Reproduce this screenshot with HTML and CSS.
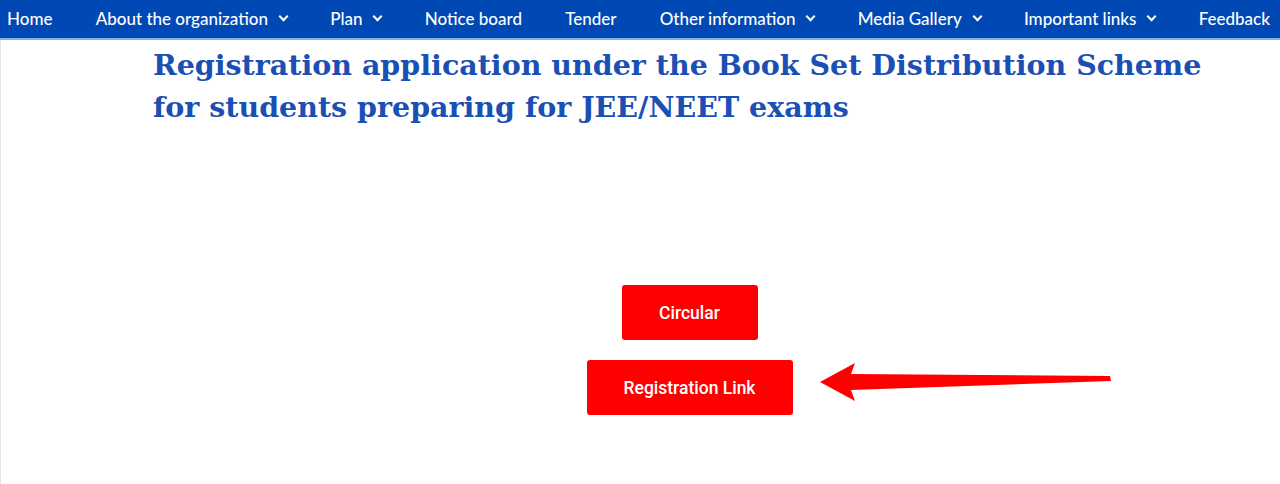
FILE: index.html
```html
<!DOCTYPE html>
<html lang="en">
<head>
<meta charset="utf-8">
<title>Registration application</title>
<link rel="stylesheet" href="styles.css">
</head>
<body>
<nav class="topnav">
  <a class="nav-item">Home</a>
  <a class="nav-item">About the organization <span class="chev"></span></a>
  <a class="nav-item">Plan <span class="chev"></span></a>
  <a class="nav-item">Notice board</a>
  <a class="nav-item">Tender</a>
  <a class="nav-item">Other information <span class="chev"></span></a>
  <a class="nav-item">Media Gallery <span class="chev"></span></a>
  <a class="nav-item">Important links <span class="chev"></span></a>
  <a class="nav-item">Feedback</a>
</nav>
<main class="page">
  <div class="content">
    <h1 class="title">Registration application under the Book Set Distribution Scheme for students preparing for JEE/NEET exams</h1>
    <div class="actions">
      <a class="btn btn-circular">Circular</a>
      <div class="reg-wrap">
        <a class="btn btn-reg">Registration Link</a>
        <svg class="arrow" width="300" height="44" viewBox="0 0 300 44">
          <polygon points="0,20 35,1 31,12 290,14 291,19 31,28 35,39" fill="#ff0000"/>
        </svg>
      </div>
    </div>
  </div>
</main>
</body>
</html>
```

FILE: styles.css
```css
html, body {
  margin: 0;
  padding: 0;
  background: #ffffff;
}

body {
  font-family: Lato, "Noto Sans", sans-serif;
}

.topnav {
  height: 40px;
  box-sizing: border-box;
  padding: 0 10px 2px 7px;
  background: #0048b4;
  border-bottom: 2px solid #7fb0ea;
  display: flex;
  align-items: center;
  justify-content: space-between;
}

.nav-item {
  color: #ffffff;
  font-size: 17px;
  font-weight: 500;
  text-decoration: none;
  display: flex;
  align-items: center;
  white-space: nowrap;
}

.chev {
  display: inline-block;
  width: 5px;
  height: 5px;
  border-right: 2px solid #ffffff;
  border-bottom: 2px solid #ffffff;
  transform: rotate(45deg);
  margin-left: 12px;
  margin-top: -4px;
}

.page {
  height: 444px;
  border-left: 1px solid #e6e6e6;
}

.content {
  margin-left: 151px;
  width: 1075px;
}

.title {
  margin: 0;
  padding: 4px 0 0 1px;
  font-family: "DejaVu Serif", serif;
  font-weight: 700;
  font-size: 28.5px;
  line-height: 42px;
  color: #1a4fb4;
}

.actions {
  margin-top: 157px;
  display: flex;
  flex-direction: column;
  align-items: center;
  gap: 20px;
}

.btn {
  display: flex;
  align-items: center;
  justify-content: center;
  background: #ff0000;
  color: #ffffff;
  font-family: Roboto, sans-serif;
  font-weight: 500;
  font-size: 17.5px;
  border-radius: 3px;
  height: 55px;
  text-decoration: none;
}

.btn-circular {
  width: 136px;
}

.btn-reg {
  width: 206px;
}

.reg-wrap {
  position: relative;
}

.arrow {
  position: absolute;
  left: 233px;
  top: 2px;
}
```
